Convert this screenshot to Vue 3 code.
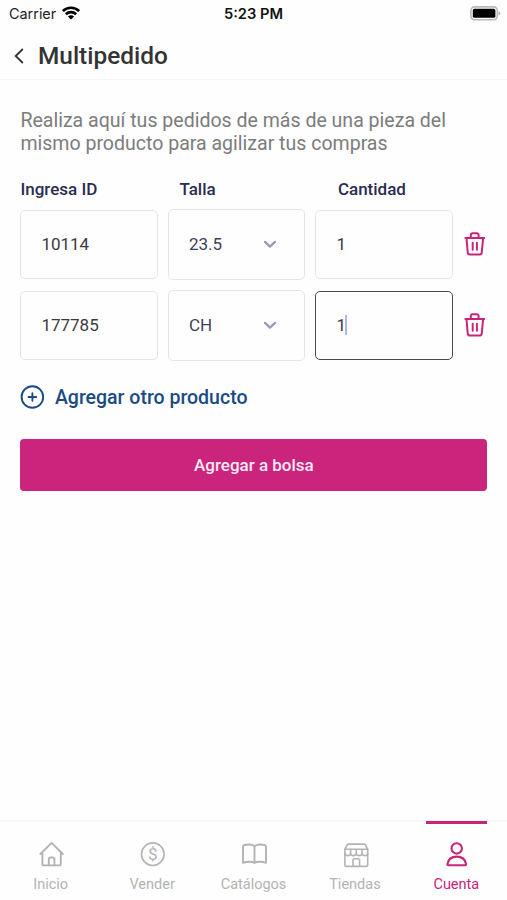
<template>
  <div class="screen">
    <div class="status">
      <div class="status-left">
        <span class="carrier">Carrier</span>
        <svg class="wifi" width="18" height="14" viewBox="0 0 18 14" fill="none" stroke="#000" stroke-width="2.7">
          <path d="M0.9 5.1C5.5 0.6 12.5 0.6 17.1 5.1" />
          <path d="M3.9 8.2C6.8 5.4 11.2 5.4 14.1 8.2" />
          <path d="M9 13.5L5.9 10.4C7.7 8.7 10.3 8.7 12.1 10.4Z" fill="#000" stroke="none" />
        </svg>
      </div>
      <span class="clock">5:23 PM</span>
      <svg class="battery" width="31" height="15" viewBox="0 0 31 15">
        <rect x="0.9" y="0.9" width="26.4" height="12.8" rx="3.6" fill="#fff" stroke="#b9b9b9" stroke-width="1.6" />
        <rect x="2.8" y="2.8" width="22.6" height="9" rx="1.6" fill="#000" />
        <path d="M28.6 5.2C31 6 31 8.6 28.6 9.4Z" fill="#b0b0b0" />
      </svg>
    </div>

    <header class="header">
      <svg class="back" width="10" height="16" viewBox="0 0 10 16" fill="none" stroke="#333" stroke-width="1.8">
        <path d="M8.8 1L1.7 8L8.8 15" />
      </svg>
      <h1 class="title">Multipedido</h1>
    </header>

    <main class="content">
      <p class="intro">Realiza aquí tus pedidos de más de una pieza del<br />mismo producto para agilizar tus compras</p>

      <div class="labels">
        <span>Ingresa ID</span>
        <span>Talla</span>
        <span>Cantidad</span>
      </div>

      <div class="rows">
        <div v-for="row in rows" :key="row.id" class="row">
          <div class="field">{{ row.id }}</div>
          <div class="field select">
            <span>{{ row.size }}</span>
            <svg width="14" height="9" viewBox="0 0 14 9" fill="none" stroke="#989abf" stroke-width="2.3" stroke-linecap="round" stroke-linejoin="round">
              <path d="M2 1.9L7 6.6L12 1.9" />
            </svg>
          </div>
          <div class="field" :class="{ focused: row.focused }">
            {{ row.quantity }}<i v-if="row.focused" class="caret"></i>
          </div>
          <button class="remove" type="button" aria-label="Eliminar">
            <svg width="22" height="24" viewBox="0 0 22 24" fill="none" stroke="#c9257b" stroke-width="2" stroke-linecap="round" stroke-linejoin="round">
              <path d="M1.4 5.9H20.2" />
              <path d="M6.8 5.7V3.2C6.8 1.9 7.5 1.2 8.7 1.2H12.7C13.9 1.2 14.6 1.9 14.6 3.2V5.7" />
              <path d="M2.5 6.2L3.7 20.2C3.8 21.8 4.6 22.6 6.1 22.6H15.4C16.9 22.6 17.7 21.8 17.8 20.2L19.1 6.2" />
              <path d="M8.7 10.8V17.8M12.9 10.8V17.8" />
            </svg>
          </button>
        </div>
      </div>

      <button class="add" type="button">
        <svg width="24" height="24" viewBox="0 0 24 24" fill="none" stroke="#1b4a84" stroke-width="1.9" stroke-linecap="round">
          <circle cx="12.4" cy="12" r="10.8" />
          <path d="M12.4 8.2V15.8M8.6 12H16.2" />
        </svg>
        <span>Agregar otro producto</span>
      </button>

      <button class="submit" type="button">Agregar a bolsa</button>
    </main>

    <nav class="tabs">
      <div v-for="tab in tabs" :key="tab.name" class="tab" :class="{ active: tab.active }">
        <svg class="tab-icon" width="26" height="26" viewBox="0 0 26 26" fill="none" stroke="currentColor" stroke-width="1.9" stroke-linecap="round" stroke-linejoin="round">
          <template v-if="tab.icon === 'home'">
            <path d="M2.4 13L13.6 1.9L24.8 13" />
            <path d="M4.4 11.6V22.7C4.4 23.6 4.9 24.4 5.8 24.4H21.4C22.3 24.4 22.8 23.6 22.8 22.7V11.6" />
            <path d="M10.8 24.2V18.6C10.8 17.4 11.6 16.5 12.7 16.5H14.5C15.6 16.5 16.4 17.4 16.4 18.6V24.2" />
          </template>
          <template v-else-if="tab.icon === 'sell'">
            <circle cx="13.8" cy="13.2" r="11.3" stroke-width="1.6" />
            <text class="coin" x="13.8" y="19" text-anchor="middle">$</text>
          </template>
          <template v-else-if="tab.icon === 'book'">
            <path d="M13.5 5.2C11.5 3.4 7.2 3.2 3.4 4C2.4 4.2 2 4.6 2 5.5V21.8C5.6 20.5 11.3 20.3 13.5 22C15.7 20.3 21.4 20.5 25 21.8V5.5C25 4.6 24.6 4.2 23.6 4C19.8 3.2 15.5 3.4 13.5 5.2ZM13.5 5.2V22" />
          </template>
          <g v-else-if="tab.icon === 'store'" stroke-width="1.6">
            <path d="M2.9 8.3L5 4.2C5.4 3.4 5.9 3.1 6.8 3.1H21.8C22.7 3.1 23.2 3.4 23.6 4.2L25.7 8.3Z" />
            <path d="M2.9 8.5V12.3C2.9 15.4 8.6 15.4 8.6 12.3C8.6 15.4 14.3 15.4 14.3 12.3C14.3 15.4 20 15.4 20 12.3C20 15.4 25.7 15.4 25.7 12.3V8.5M8.6 8.5V12.3M14.3 8.5V12.3M20 8.5V12.3" />
            <path d="M2.9 12.5V23.7C2.9 24.9 3.4 25.4 4.6 25.4H24C25.2 25.4 25.7 24.9 25.7 23.7V12.5" />
            <path d="M11 25.2V19.6C11 18.5 11.6 17.8 12.7 17.8H15.9C17 17.8 17.6 18.5 17.6 19.6V25.2" />
          </g>
          <g v-else stroke-width="2.1">
            <circle cx="13.7" cy="7.4" r="5.2" />
            <path d="M5.3 24.2H22.2C22.9 24.2 23.2 23.8 23.1 23.1C22.3 18.4 18.7 15.6 13.7 15.6C8.7 15.6 5.2 18.4 4.4 23.1C4.3 23.8 4.6 24.2 5.3 24.2Z" />
          </g>
        </svg>
        <span class="tab-name">{{ tab.name }}</span>
      </div>
    </nav>
  </div>
</template>

<script setup>
import { ref } from 'vue'

const rows = ref([
  { id: '10114', size: '23.5', quantity: 1, focused: false },
  { id: '177785', size: 'CH', quantity: 1, focused: true }
])

const tabs = [
  { name: 'Inicio', icon: 'home' },
  { name: 'Vender', icon: 'sell' },
  { name: 'Catálogos', icon: 'book' },
  { name: 'Tiendas', icon: 'store' },
  { name: 'Cuenta', icon: 'user', active: true }
]
</script>

<style>
body {
  background: #fefefe;
}
</style>

<style scoped>
.screen {
  box-sizing: border-box;
  display: flex;
  flex-direction: column;
  height: 100vh;
  overflow: hidden;
  background: #fefefe;
  font-family: Roboto, sans-serif;
}

button {
  padding: 0;
  border: 0;
  background: none;
  font-family: inherit;
}

svg {
  display: block;
  flex-shrink: 0;
}

.tab-icon {
  overflow: visible;
}

.status {
  display: grid;
  grid-template-columns: 1fr auto 1fr;
  align-items: center;
  height: 26px;
  padding: 0 6px 0 9px;
  font-family: Inter, sans-serif;
}

.status-left {
  display: flex;
  align-items: center;
  gap: 6px;
}

.carrier {
  font-size: 14.4px;
  color: #222;
}

.clock {
  margin-right: 3px;
  padding-top: 2px;
  font-size: 14.7px;
  font-weight: 600;
  color: #111;
}

.battery {
  justify-self: end;
}

.header {
  box-sizing: border-box;
  display: flex;
  align-items: center;
  gap: 14px;
  height: 54px;
  padding: 6px 14px 0;
  border-bottom: 1px solid #f5f5f5;
}

.title {
  margin: 0;
  font-size: 24.4px;
  font-weight: 500;
  color: #333;
}

.content {
  display: flex;
  flex: 1;
  flex-direction: column;
  padding: 29px 19.6px 0 20.4px;
}

.intro {
  margin: 0;
  font-size: 19.55px;
  line-height: 23px;
  color: #7c7c7c;
  white-space: nowrap;
}

.labels {
  display: grid;
  grid-template-columns: 159px 158.5px 1fr;
  margin-top: 24px;
  font-size: 17px;
  font-weight: 500;
  line-height: 20px;
  color: #2a2d50;
}

.rows {
  display: flex;
  flex-direction: column;
  gap: 10px;
  margin-top: 10px;
}

.row {
  display: flex;
  align-items: center;
  gap: 10px;
}

.field {
  box-sizing: border-box;
  display: flex;
  align-items: center;
  width: 137.5px;
  height: 69px;
  padding: 0 20px 2px;
  border: 1px solid #e5e5e5;
  border-radius: 5px;
  font-size: 17px;
  color: #3b3b3b;
}

.select {
  justify-content: space-between;
  height: 71px;
  padding-right: 27.5px;
  color: #3c3e5e;
}

.select svg {
  margin-top: 2px;
}

.focused {
  border-color: #4a4a4a;
}

.caret {
  width: 2px;
  height: 20px;
  margin-top: 1px;
  margin-left: -1px;
  background: #a9b8f2;
}

.remove {
  margin-left: 1.2px;
  padding-bottom: 2px;
}

.add {
  display: flex;
  align-items: center;
  gap: 10.5px;
  height: 24px;
  margin-top: 24px;
  font-size: 19.5px;
  font-weight: 500;
  color: #1b4a84;
}

.submit {
  height: 52px;
  margin-top: 30px;
  padding-bottom: 1px;
  border-radius: 4px;
  background: #cb247c;
  font-size: 17px;
  font-weight: 500;
  color: #fdeaf5;
}

.tabs {
  box-sizing: border-box;
  display: flex;
  height: 80px;
  border-top: 2px solid #f6f6f6;
}

.tab {
  position: relative;
  display: flex;
  flex: 1;
  flex-direction: column;
  align-items: center;
  padding-top: 19px;
  color: #b3b3b3;
}

.tab.active {
  color: #c9257b;
}

.tab.active::before {
  content: '';
  position: absolute;
  top: -1px;
  left: 50%;
  width: 61px;
  height: 3px;
  margin-left: -30.5px;
  background: #c9257b;
}

.tab-name {
  margin-top: 9px;
  font-size: 14.5px;
  line-height: 18px;
}

.coin {
  fill: currentColor;
  stroke: none;
  font-size: 17px;
}
</style>
